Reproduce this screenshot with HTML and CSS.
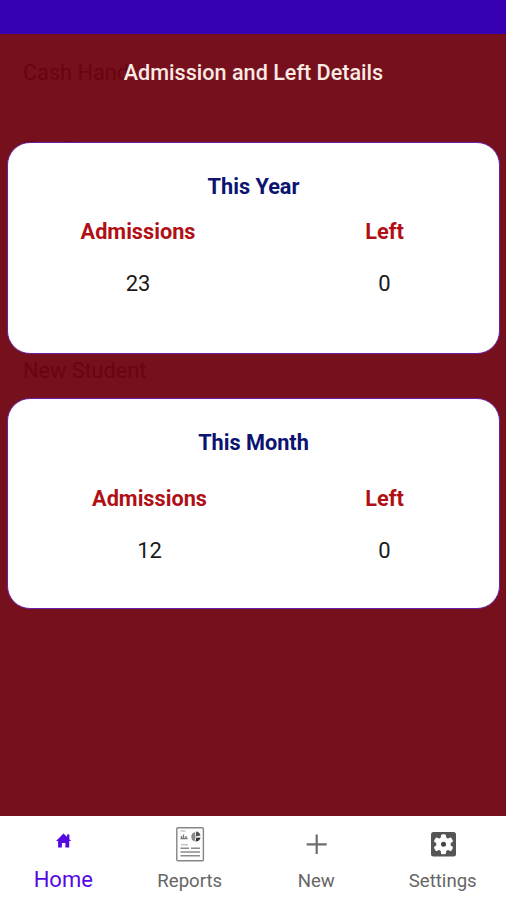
FILE: index.html
```
<!DOCTYPE html>
<html lang="en">
<head>
<meta charset="UTF-8">
<meta name="viewport" content="width=device-width, initial-scale=1.0">
<title>Admission and Left Details</title>
<link rel="stylesheet" href="styles.css">
</head>
<body>

<div class="status-bar"></div>

<div class="content">
    <!-- Home menu, dimmed under the overlay -->
    <div class="menu-behind">
        <span class="menu-item cash">Cash Hand</span>
        <span class="menu-item fee">Fee Payment</span>
        <span class="menu-item student">New Student</span>
    </div>

    <h1 class="page-title"><span>Admission and Left Details</span></h1>

    <div class="card year">
        <h2><span>This Year</span></h2>
        <div class="stats">
            <div class="stat">
                <span class="label">Admissions</span>
                <span class="value">23</span>
            </div>
            <div class="stat">
                <span class="label">Left</span>
                <span class="value">0</span>
            </div>
        </div>
    </div>

    <div class="card month">
        <h2><span>This Month</span></h2>
        <div class="stats">
            <div class="stat">
                <span class="label">Admissions</span>
                <span class="value">12</span>
            </div>
            <div class="stat">
                <span class="label">Left</span>
                <span class="value">0</span>
            </div>
        </div>
    </div>
</div>

<div class="bottom-nav">
    <div class="nav-item active">
        <svg class="icon" width="44" height="36" viewBox="0 0 44 36">
            <path fill="#5608e0" d="M22.5 7.6 L30.2 15 H28.2 V21.6 H24.4 V17 H20.9 V21.6 H17.1 V15 H15 Z M26 8.4 h2.4 v5 l-2.4 -2.4 Z"/>
        </svg>
        <span>Home</span>
    </div>
    <div class="nav-item">
        <svg class="icon" width="44" height="36" viewBox="0 0 44 36">
            <rect x="8.8" y="1.7" width="26.6" height="33" rx="1" fill="#fdfdfd" stroke="#858585" stroke-width="1.4"/>
            <path d="M12.5 5h5M13 18.8h7" stroke="#aaa" stroke-width="1"/>
            <path d="M12.5 12.5h7M13.5 12v-2M15.5 12V8.5M18 12v-2" stroke="#777" stroke-width="1.3"/>
            <path d="M27 6 A5 5 0 0 0 26.5 15.5 L27.5 11 Z" fill="#888"/>
            <path d="M28 5.5 A5 5 0 0 1 32.5 9.5 L28 10.5 Z" fill="#555"/>
            <path d="M32.5 11.5 A5 5 0 0 1 27.5 15.5 L28.2 11.8 Z" fill="#333"/>
            <path d="M12.5 22.2h8.5M23 22.2h9M12.5 26h19.5M12.5 29.8h19.5" stroke="#8a8a8a" stroke-width="1.4"/>
        </svg>
        <span>Reports</span>
    </div>
    <div class="nav-item">
        <svg class="icon" width="44" height="36" viewBox="0 0 44 36">
            <path d="M12.7 18.3h20M22.7 8.5v19.6" stroke="#6d6d6d" stroke-width="2.2"/>
        </svg>
        <span>New</span>
    </div>
    <div class="nav-item">
        <svg class="icon" width="44" height="36" viewBox="0 0 44 36">
            <rect x="10" y="6" width="25" height="24.6" rx="2.5" fill="#555"/>
            <g transform="translate(22.5 18.3)" fill="#fff">
                <circle r="7.2"/>
                <rect x="-2.6" y="-10" width="5.2" height="20" rx="1.6"/>
                <rect x="-2.6" y="-10" width="5.2" height="20" rx="1.6" transform="rotate(60)"/>
                <rect x="-2.6" y="-10" width="5.2" height="20" rx="1.6" transform="rotate(120)"/>
                <circle r="2.5" fill="#444"/>
            </g>
        </svg>
        <span>Settings</span>
    </div>
</div>

</body>
</html>
```
FILE: styles.css
```
* {
    box-sizing: border-box;
}

body {
    margin: 0;
    height: 900px;
    display: flex;
    flex-direction: column;
    overflow: hidden;
    font-family: Roboto, "Liberation Sans", sans-serif;
    background-color: #fff;
}

.status-bar {
    height: 34px;
    background-color: #3700b3;
}

.content {
    position: relative;
    height: 782px;
    padding: 0 6px 0 7px;
    background-color: #76101c;
}

.menu-behind {
    position: absolute;
    top: 0;
    left: 23px;
    font-size: 21.7px;
    line-height: 26px;
    color: #680510;
}

.menu-item {
    position: absolute;
    white-space: nowrap;
}

.cash {
    top: 26px;
}

.fee {
    top: 103px;
}

.student {
    top: 324px;
}

.page-title {
    position: relative;
    margin: 0;
    height: 108px;
    padding-top: 26px;
    text-align: center;
    font-size: 21.6px;
    font-weight: 500;
    line-height: 26px;
    color: #fbe9e4;
}

.card {
    position: relative;
    height: 212px;
    background-color: #fff;
    border: 1px solid #6a1fa5;
    border-radius: 23px;
    text-align: center;
}

.card h2 {
    margin: 0;
    font-size: 21.7px;
    font-weight: 700;
    line-height: 26px;
    color: #0b1470;
}

.year h2 {
    padding-top: 31px;
}

.month {
    margin-top: 44px;
    height: 211px;
}

.month h2 {
    padding-top: 31px;
}

.stats {
    display: grid;
    line-height: 26px;
}

.year .stats {
    grid-template-columns: 260px 229px;
    column-gap: 2px;
    padding-top: 19px;
}

.month .stats {
    grid-template-columns: 283px 187px;
    padding-top: 30px;
}

.stat {
    display: flex;
    flex-direction: column;
    align-items: center;
    gap: 26px;
}

.label {
    font-size: 21.7px;
    font-weight: 700;
    color: #b01015;
}

.value {
    font-size: 22px;
    color: #1a1a1a;
}

.bottom-nav {
    height: 84px;
    display: grid;
    grid-template-columns: repeat(4, 1fr);
    background-color: #fff;
}

.nav-item {
    display: flex;
    flex-direction: column;
    align-items: center;
    padding-top: 10px;
    font-size: 18.6px;
    line-height: 26px;
    color: #666;
}

.nav-item span {
    margin-top: 6px;
}

.active {
    font-size: 22px;
    color: #5608e0;
}

.active span {
    margin-top: 5px;
}
```
